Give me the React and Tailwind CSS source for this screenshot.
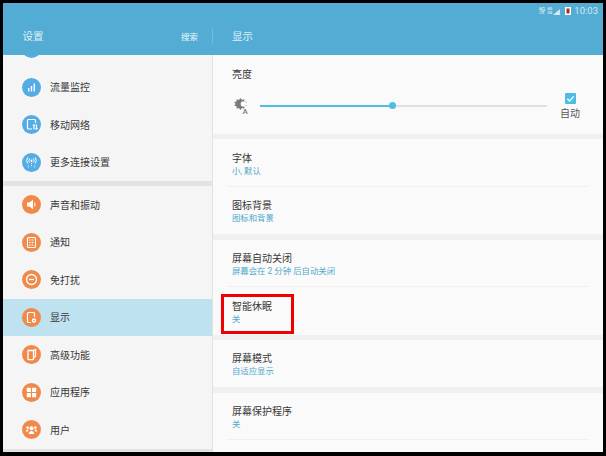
import React from 'react';

const FONT = "font-['Roboto','Noto_Sans_CJK_SC',sans-serif]";

const BarsIcon = () => (
    <svg viewBox="0 0 19 19" className="w-full h-full" fill="#fff">
        <rect x="6" y="10" width="1.4" height="3.5" />
        <rect x="8.8" y="8" width="1.4" height="5.5" />
        <rect x="11.6" y="5.5" width="1.4" height="8" />
    </svg>
);
const MobileIcon = () => (
    <svg viewBox="0 0 19 19" className="w-full h-full" fill="none" stroke="#fff" strokeWidth="1.2">
        <path d="M10 14H6.5a1 1 0 0 1-1-1V5.5a1 1 0 0 1 1-1h6a1 1 0 0 1 1 1V8" />
        <path d="M12 9.5v5M14.5 9.5v5" />
        <path d="M10.8 11 12 9.5l1.2 1.5M13.3 13l1.2 1.5 1.2-1.5" strokeWidth="0.8" />
    </svg>
);
const AntennaIcon = () => (
    <svg viewBox="0 0 19 19" className="w-full h-full" fill="none" stroke="#fff" strokeWidth="1">
        <circle cx="9.5" cy="7.5" r="1" fill="#fff" stroke="none" />
        <path d="M9.5 8v6" strokeDasharray="1.2 0.8" />
        <path d="M7.6 5.6a3 3 0 0 0 0 3.8M11.4 5.6a3 3 0 0 1 0 3.8" />
        <path d="M5.8 4.4a5 5 0 0 0 0 6.2M13.2 4.4a5 5 0 0 1 0 6.2" />
        <path d="M6.4 12.5v2M12.6 12.5v2" strokeDasharray="1 0.6" />
    </svg>
);
const SoundIcon = () => (
    <svg viewBox="0 0 19 19" className="w-full h-full" fill="#fff">
        <path d="M5 7.5h2.5L11 4.8v9.4L7.5 11.5H5z" />
        <path d="M12.3 7a3.2 3.2 0 0 1 0 5z" />
    </svg>
);
const NotifyIcon = () => (
    <svg viewBox="0 0 19 19" className="w-full h-full" fill="none" stroke="#fff">
        <rect x="5.5" y="4.5" width="8" height="10" rx="1" strokeWidth="1.1" />
        <path d="M7 7h5M7 9.5h5M7 12h5" strokeWidth="1.1" strokeDasharray="1 0.5" />
    </svg>
);
const DndIcon = () => (
    <svg viewBox="0 0 19 19" className="w-full h-full" fill="none" stroke="#fff" strokeWidth="1.3">
        <circle cx="9.5" cy="9.5" r="5" />
        <path d="M7 9.5h5" />
    </svg>
);
const DisplayIcon = () => (
    <svg viewBox="0 0 19 19" className="w-full h-full" fill="none" stroke="#fff" strokeWidth="1.2">
        <path d="M9 14.5H6.5a1 1 0 0 1-1-1v-8a1 1 0 0 1 1-1h5a1 1 0 0 1 1 1V9" />
        <circle cx="12" cy="12.5" r="2.2" fill="#fff" stroke="none" />
        <circle cx="12" cy="12.5" r="0.8" fill="#f08a4b" stroke="none" />
    </svg>
);
const AdvancedIcon = () => (
    <svg viewBox="0 0 19 19" className="w-full h-full" fill="none" stroke="#fff" strokeWidth="1.3">
        <path d="M6 5.5h5.5v8.5a.6.6 0 0 1-.6.6H6.6A.6.6 0 0 1 6 14z" />
        <path d="M11.5 5.5 13.5 4.5v7l-2 1.5" />
    </svg>
);
const AppsIcon = () => (
    <svg viewBox="0 0 19 19" className="w-full h-full" fill="#fff">
        <rect x="4.8" y="4.8" width="4.2" height="4.2" rx="0.5" />
        <rect x="10" y="4.8" width="4.2" height="4.2" rx="0.5" />
        <rect x="4.8" y="10" width="4.2" height="4.2" rx="0.5" />
        <rect x="10" y="10" width="4.2" height="4.2" rx="0.5" />
    </svg>
);
const UsersIcon = () => (
    <svg viewBox="0 0 19 19" className="w-full h-full" fill="#fff">
        <circle cx="9.5" cy="8.3" r="2" />
        <path d="M6.8 14c0-2 1.2-3 2.7-3s2.7 1 2.7 3z" />
        <circle cx="5.6" cy="7.6" r="1.3" />
        <circle cx="13.4" cy="7.6" r="1.3" />
        <path d="M3.8 11.6c0-1.4.8-2.2 1.8-2.2.5 0 .9.1 1.2.4-.5.5-.9 1.1-1 1.8zM15.2 11.6c0-1.4-.8-2.2-1.8-2.2-.5 0-.9.1-1.2.4.5.5.9 1.1 1 1.8z" />
    </svg>
);

const GROUP_ONE = [
    { label: '流量监控', icon: BarsIcon },
    { label: '移动网络', icon: MobileIcon },
    { label: '更多连接设置', icon: AntennaIcon },
];

const GROUP_TWO = [
    { label: '声音和振动', icon: SoundIcon },
    { label: '通知', icon: NotifyIcon },
    { label: '免打扰', icon: DndIcon },
    { label: '显示', icon: DisplayIcon, active: true },
    { label: '高级功能', icon: AdvancedIcon },
    { label: '应用程序', icon: AppsIcon },
    { label: '用户', icon: UsersIcon },
];

const SideRow = ({ item, circle }) => {
    const Icon = item.icon;
    return (
        <div className={`h-[37.5px] flex items-center pl-[19px] gap-[9px] ${item.active ? 'bg-[#bfe2f0]' : ''}`}>
            <div className={`w-[19px] h-[19px] rounded-full shrink-0 ${circle}`}>
                <Icon />
            </div>
            <span className="text-[10px] leading-[14px] mt-[2px] text-[#383838]">{item.label}</span>
        </div>
    );
};

const SettingRow = ({ title, sub, divider, boxed }) => (
    <div className="relative h-[47.5px] pt-[12.5px] pl-[19px]">
        <p className="text-[10px] leading-[13px] text-[#383838]">{title}</p>
        <p className="text-[8.4px] leading-[12px] text-[#4fa8cc]">{sub}</p>
        {divider && <div className="absolute left-[14px] right-[14px] bottom-0 h-px bg-[#f0f0f0]" />}
        {boxed && <div className="absolute left-[8px] top-[6.5px] w-[73px] h-[40px] border-[3px] border-[#f00000]" />}
    </div>
);

const StatusIcons = () => (
    <div className="flex items-center h-[14px] pt-[1px] pr-[5px] justify-end text-white/75">
        <span className="w-[9px] flex flex-col items-center font-bold">
            <span className="text-[5.5px] leading-[5px]">4G</span>
            <span className="text-[3px] leading-[3px]">LTE</span>
        </span>
        <span className="w-[7px] flex flex-col items-center font-bold">
            <span className="text-[4px] leading-[4px]">4G</span>
            <span className="text-[4px] leading-[4px]">3G</span>
        </span>
        <svg viewBox="0 0 8 7" className="w-[7px] h-[6px] mt-[2px]" fill="currentColor">
            <path d="M0 7 8 0v7z" />
        </svg>
        <svg viewBox="0 0 6 9" className="w-[6px] h-[9px] ml-[5px]">
            <rect x="0" y="1" width="6" height="8" fill="#fff" />
            <rect x="1.5" y="2.5" width="3" height="5" fill="#b02a2a" />
        </svg>
        <span className="text-[9.5px] leading-[14px] ml-[3px]">10:03</span>
    </div>
);

const App = () => (
    <div className={`w-[606px] h-[456px] bg-black pt-[3px] pl-[3px] pr-[3px] pb-[4px] overflow-hidden ${FONT}`}>
        <div className="h-[449px] flex flex-col overflow-hidden">
            {/* header */}
            <div className="h-[52px] bg-[#53acd3] shrink-0">
                <StatusIcons />
                <div className="flex items-center h-[16px] mt-[11px]">
                    <div className="w-[209px] flex items-center justify-between pl-[19.5px] pr-[14px]">
                        <span className="text-[10.5px] leading-[16px] pt-[2px] text-white/80">设置</span>
                        <span className="text-[8.5px] leading-[16px] pt-[1px] text-white/90">搜索</span>
                    </div>
                    <div className="w-px h-[16px] bg-white/20" />
                    <span className="ml-[19px] text-[10.5px] leading-[16px] pt-[2px] text-white/80">显示</span>
                </div>
            </div>

            <div className="flex-1 flex min-h-0">
                {/* left list */}
                <div className="w-[209px] bg-[#f5f5f5] shrink-0 overflow-hidden">
                    <div className="h-[13.5px] overflow-hidden pl-[19px]">
                        <div className="w-[19px] h-[19px] rounded-full bg-[#53ade4] -mt-[16px]" />
                    </div>
                    {GROUP_ONE.map(item => <SideRow key={item.label} item={item} circle="bg-[#53ade4]" />)}
                    <div className="h-[5px] bg-[#e3e3e3]" />
                    {GROUP_TWO.map(item => <SideRow key={item.label} item={item} circle="bg-[#f08a4b]" />)}
                    <div className="h-[5px] bg-[#e3e3e3]" />
                </div>
                <div className="w-px bg-[#e2e2e2] shrink-0" />

                {/* right panel */}
                <div className="flex-1 bg-[#fafafa] overflow-hidden">
                    <div className="h-[79px] pl-[19px] pr-[14px] pt-[13px]">
                        <p className="text-[10px] leading-[14px] text-[#383838]">亮度</p>
                        <div className="flex items-start mt-[11px]">
                            <svg viewBox="0 0 16 16" className="w-[16px] h-[16px] shrink-0 mt-[5px] ml-[2px] -mr-[2px] text-[#7a7a7a]" fill="currentColor">
                                <path d="M6.5 0 8 2 10.3 1.2 10.4 3.6 12.8 4 11.4 6 12.8 7.800 10.400 8.300 10.300 10.700 8 9.900 6.500 12 5 9.900 2.700 10.700 2.600 8.300 .2 7.800 1.600 6 .2 4 2.600 3.600 2.700 1.200 5 2z" />
                                <circle cx="9.500" cy="6" r="2.800" fill="#fafafa" />
                                <text x="8.500" y="15.500" fontSize="8" fontWeight="500">A</text>
                            </svg>
                            <div className="ml-[12px] w-[287px] h-[7px] mt-[9px] flex items-center shrink-0">
                                <div className="w-[129px] h-[2px] bg-[#4fbde3]" />
                                <div className="w-[7px] h-[7px] rounded-full bg-[#4fbde3] shrink-0" />
                                <div className="flex-1 h-[2px] bg-[#e0e0e0]" />
                            </div>
                            <div className="ml-[13px] flex flex-col items-center">
                                <div className="w-[11px] h-[11px] bg-[#4fbde3] rounded-[1px]">
                                    <svg viewBox="0 0 11 11" className="w-full h-full" fill="none" stroke="#fff" strokeWidth="1.300">
                                        <path d="M2.300 5.800 4.500 8l4.200-4.600" />
                                    </svg>
                                </div>
                                <span className="text-[10px] leading-[14px] mt-[3px] text-[#555]">自动</span>
                            </div>
                        </div>
                    </div>
                    <div className="h-[5px] bg-[#f0f0f0]" />
                    <SettingRow title="字体" sub="小, 默认" divider />
                    <SettingRow title="图标背景" sub="图标和背景" />
                    <div className="h-[5.5px] bg-[#f0f0f0]" />
                    <SettingRow title="屏幕自动关闭" sub="屏幕会在 2 分钟 后自动关闭" divider />
                    <SettingRow title="智能休眠" sub="关" boxed />
                    <div className="h-[5px] bg-[#f0f0f0]" />
                    <SettingRow title="屏幕模式" sub="自适应显示" />
                    <div className="h-[5.5px] bg-[#f0f0f0]" />
                    <SettingRow title="屏幕保护程序" sub="关" divider />
                </div>
            </div>
        </div>
    </div>
);

export default App;
